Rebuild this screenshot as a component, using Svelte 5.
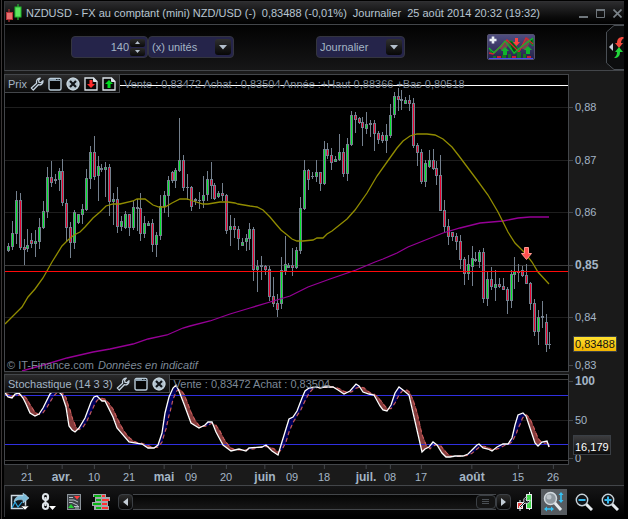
<script>
  let units = $state(140);
  let unitKind = $state('(x) unités');
  let period = $state('Journalier');
  let scroll = $state(100);

  // [x, high, low, body top, body bottom, kind] : g up, r down, n flat
  const candles = [
    [8,243,252,246,251,'g'],[12,221,250,233,247,'g'],[16,191,244,200,234,'g'],[20,193,250,200,248,'r'],
    [24,239,265,247,250,'r'],[27,229,252,245,249,'g'],[31,233,248,240,244,'r'],[35,230,257,241,244,'g'],
    [39,218,249,227,242,'g'],[43,201,229,211,228,'g'],[47,167,218,177,212,'g'],[51,161,187,177,183,'r'],
    [55,174,184,179,181,'n'],[59,168,191,171,180,'g'],[62,159,206,171,203,'r'],[66,199,242,203,228,'r'],
    [70,222,258,227,243,'r'],[74,210,249,212,243,'g'],[78,214,224,214,223,'g'],[82,204,224,209,215,'g'],
    [86,169,211,178,210,'g'],[90,146,189,152,179,'g'],[94,136,180,152,177,'r'],[98,156,201,166,176,'g'],
    [101,164,172,168,170,'n'],[105,162,197,167,170,'g'],[109,164,216,167,202,'r'],[113,193,225,199,202,'g'],
    [117,187,233,199,227,'r'],[121,216,231,221,227,'g'],[125,211,229,214,228,'g'],[129,214,236,214,228,'r'],
    [133,201,230,207,228,'g'],[137,199,231,207,209,'n'],[140,193,241,208,234,'r'],[144,216,238,223,234,'g'],
    [148,221,226,223,226,'g'],[152,219,252,223,245,'r'],[156,232,257,235,245,'g'],[160,195,240,206,236,'g'],
    [164,191,213,195,207,'g'],[168,176,217,180,196,'g'],[172,171,183,172,181,'r'],[175,168,188,170,181,'g'],
    [179,118,172,160,171,'g'],[183,155,191,160,188,'r'],[187,174,200,187,188,'n'],[191,186,211,187,207,'r'],
    [195,198,205,199,201,'n'],[199,192,209,200,201,'n'],[203,176,208,195,201,'g'],[207,171,201,179,195,'g'],
    [211,162,199,179,186,'r'],[214,183,200,185,199,'r'],[218,191,198,193,197,'g'],[222,183,201,193,196,'r'],
    [226,194,234,195,231,'r'],[230,215,246,226,230,'g'],[234,218,238,226,230,'r'],[238,226,250,229,239,'r'],
    [242,238,246,242,246,'g'],[246,234,251,238,242,'g'],[249,223,250,229,239,'g'],[253,227,281,229,270,'r'],
    [257,260,292,266,270,'g'],[261,256,280,265,267,'n'],[265,265,275,266,270,'r'],[269,266,301,269,297,'r'],
    [273,277,307,296,304,'r'],[277,294,317,303,310,'r'],[281,257,309,270,304,'g'],[285,236,275,264,271,'g'],
    [288,263,268,265,268,'g'],[292,248,276,265,268,'r'],[296,247,269,250,268,'g'],[300,197,254,208,251,'g'],
    [304,160,210,170,209,'g'],[308,169,190,170,180,'r'],[312,172,179,176,177,'n'],[316,160,182,172,177,'g'],
    [320,172,191,172,184,'r'],[324,141,185,149,184,'g'],[327,143,159,149,156,'r'],[331,148,170,155,163,'r'],
    [335,156,162,159,162,'g'],[339,134,161,152,160,'g'],[343,148,177,152,174,'r'],[347,138,181,144,174,'g'],
    [351,111,146,115,145,'g'],[355,112,133,115,120,'r'],[359,117,124,118,123,'r'],[362,117,146,122,128,'r'],
    [366,112,134,124,129,'g'],[370,120,137,123,125,'n'],[374,120,151,123,134,'r'],[378,131,144,133,140,'r'],
    [382,132,143,135,141,'r'],[386,124,153,135,141,'g'],[390,104,138,115,136,'g'],[394,92,118,96,115,'g'],
    [398,88,111,96,100,'r'],[401,90,110,99,101,'n'],[405,97,104,100,104,'g'],[409,95,111,100,104,'r'],
    [413,98,148,103,146,'r'],[417,143,166,145,153,'r'],[421,149,184,152,182,'r'],[425,160,187,163,182,'g'],
    [429,150,168,160,167,'g'],[433,149,170,160,169,'r'],[436,161,185,168,176,'r'],[440,155,211,175,211,'r'],
    [444,200,233,210,227,'r'],[448,219,245,226,237,'r'],[452,232,241,232,237,'r'],[456,233,250,236,242,'r'],
    [460,235,269,241,260,'r'],[464,257,285,259,274,'r'],[468,255,280,264,274,'g'],[472,246,286,258,267,'g'],
    [475,252,262,259,261,'n'],[479,250,268,252,262,'g'],[483,248,303,252,299,'r'],[487,271,306,279,299,'g'],
    [491,267,290,279,287,'r'],[495,270,301,284,288,'g'],[499,278,288,284,287,'r'],[503,278,290,286,290,'r'],
    [507,287,314,289,301,'r'],[511,270,308,274,301,'g'],[514,257,289,271,275,'g'],[518,264,282,271,273,'r'],
    [522,266,277,270,276,'r'],[526,264,284,275,284,'r'],[530,282,310,283,304,'r'],[534,299,336,303,332,'r'],
    [538,310,345,317,332,'g'],[542,301,328,316,318,'n'],[546,314,352,322,345,'r'],[549,332,349,344,345,'n']
  ];
  const body = { g: '#00e62a', r: '#e8002f', n: '#74808e' };

  const fastAverage = '5,324 17,312 22,307 28,297 35,289 43,278 52,262 62,246 68,240 74,235 80,232 85,227 93,218 100,212 106,206 113,204 120,204 133,201 137,199 145,199 153,205 159,207 165,207 172,203 180,199 187,199 193,201 203,204 208,204 220,202 228,202 235,203 238,204 250,206 257,207 263,210 270,217 275,223 281,230 286,234 292,239 297,241 303,241 313,240 317,238 323,238 327,234 332,231 347,219 355,210 367,193 377,176 387,162 397,148 403,141 410,136 417,134 423,134 427,134 435,135 443,139 452,147 459,156 468,168 477,180 488,195 498,212 508,232 515,243 525,253 532,262 538,272 549,284';
  const slowAverage = '22,371 47,364 67,358 93,352 110,349 133,344 148,339 167,335 183,328 190,326 210,321 230,314 250,308 270,302 290,296 308,287 330,279 356,270 375,262 383,259 397,253 408,247 423,241 443,233 460,228 480,223 503,221 518,218 530,217 549,217';

  const fastK = [
    [5,393],[8,397],[12,398],[15,394],[19,393],[23,398],[26,404],[30,413],[35,416],[39,414],[43,408],[50,394],[53,391],[58,391],[62,395],
    [66,407],[69,426],[72,430],[75,432],[79,428],[85,418],[91,402],[94,397],[97,396],[102,401],[105,401],[113,417],[117,428],[129,442],
    [142,444],[148,448],[154,448],[158,445],[162,433],[165,413],[169,397],[173,388],[176,385],[179,391],[184,404],[191,423],[199,428],
    [205,425],[208,422],[212,422],[216,432],[223,445],[231,451],[239,449],[246,451],[249,448],[262,447],[266,445],[272,451],[278,455],
    [281,445],[285,432],[289,419],[293,417],[297,411],[302,398],[305,391],[309,388],[317,387],[320,388],[324,387],[333,387],[338,390],
    [344,394],[350,391],[356,384],[359,386],[363,392],[369,394],[374,395],[380,406],[383,410],[387,411],[391,405],[395,393],[399,387],
    [403,390],[409,395],[422,452],[425,449],[429,447],[433,442],[437,445],[442,453],[446,457],[450,457],[455,456],[463,456],[468,454],
    [473,449],[477,445],[479,444],[483,448],[488,449],[492,451],[497,447],[503,444],[508,444],[512,438],[515,425],[518,415],[523,413],
    [526,416],[530,428],[535,443],[538,446],[542,442],[547,441],[549,447]
  ];

  function valueAt(x) {
    if (x <= fastK[0][0]) return fastK[0][1];
    for (let i = 1; i < fastK.length; i++) {
      const [x1, y1] = fastK[i];
      if (x <= x1) {
        const [x0, y0] = fastK[i - 1];
        return y0 + ((x - x0) * (y1 - y0)) / (x1 - x0);
      }
    }
    return fastK[fastK.length - 1][1];
  }

  let above = '';
  let below = '';
  const signal = [];
  for (let x = 5; x < 550; x++) {
    const k = valueAt(x);
    const d = (k + valueAt(x - 4) + valueAt(x - 8)) / 3;
    signal.push(`${x},${d.toFixed(1)}`);
    const bar = `M${x + 0.5} ${k.toFixed(1)}V${d.toFixed(1)}`;
    if (d < k) above += bar;
    else below += bar;
  }
  const kLine = fastK.map((p) => p.join(',')).join(' ');

  const prices = [['0,88',107],['0,87',160],['0,86',212],['0,85',265],['0,84',317],['0,83',365]];
  const levels = [['100',381],['50',420],['0',458]];
  const days = [['21',27],['avr.',62],['10',94],['21',129],['mai',164],['09',191],['20',226],['juin',265],['09',292],['18',324],['juil.',366],['08',390],['17',421],['août',472],['15',518],['26',553]];
</script>

{#snippet wrench()}
  <svg width="14" height="14" viewBox="0 0 14 14"><path d="M1.3 11 6.6 6.2C6 3.600 7.500 1 10.300 1.200L8.600 3.200 9 5.300 11 5.600 13 3.800C13.300 6.800 10.700 8.400 8.300 7.700L3.300 13Z" fill="#15191d" stroke="#c5d3df" stroke-width="1.300" stroke-linejoin="round" /></svg>
{/snippet}
{#snippet pane()}
  <svg width="14" height="14" viewBox="0 0 14 14"><rect x="1" y="1.500" width="12" height="11.500" rx="1.500" fill="#050505" stroke="#b9cbd8" stroke-width="1.400" /><path d="M1.500 3h11" stroke="#8fa3b2" stroke-width="2" /><path d="M8 2.500h1.500M10.500 2.500h1.500" stroke="#172027" /></svg>
{/snippet}
{#snippet cross()}
  <svg width="14" height="14" viewBox="0 0 14 14"><circle cx="7" cy="7" r="6.500" fill="#b3c3ce" /><path d="M4 4l6 6M10 4l-6 6" stroke="#101418" stroke-width="2.200" /><circle cx="7" cy="7" r="6" fill="none" stroke="#d6e2ea" stroke-width=".7" /></svg>
{/snippet}
{#snippet sheet(up)}
  <svg width="14" height="14" viewBox="0 0 14 14"><path d="M1 1h8.500L13 4.500V13H1Z" fill="#080808" stroke="#dce4ea" stroke-width="1.300" /><path d="M9.500 1v3.500H13" fill="#dce4ea" stroke="#dce4ea" />
    {#if up}<path d="M7 3l4 4H8.500v4h-3V7H3Z" fill="#00dc20" />{:else}<path d="M5.500 3h3v4H11l-4 4-4-4h2.500Z" fill="#ff2b2b" />{/if}</svg>
{/snippet}
{#snippet caret()}
  <span class="caret"><svg width="8" height="5" viewBox="0 0 8 5"><path d="M0 0h8L4 4.500Z" fill="#b4c0cc" /></svg></span>
{/snippet}

<div class="window">
  <header class="title">
    <svg width="18" height="18" viewBox="0 0 18 18"><path d="M4 5v13" stroke="#c43a3e" /><path d="M13 0v16" stroke="#29d235" /><rect x="1.500" y="8.500" width="6" height="7" fill="#e86f6f" stroke="#b6323a" /><rect x="10" y="3" width="6" height="10" fill="#5fe45f" stroke="#20b52c" /></svg>
    <h1>NZDUSD - FX au comptant (mini) NZD/USD (-)</h1>
    <span>0,83488 (-0,01%)</span>
    <span>Journalier&nbsp; 25 août 2014 20:32 (19:32)</span>
    <div class="controls">
      <button aria-label="Réduire"><svg width="9" height="9" viewBox="0 0 9 9"><path d="M0 8h9" stroke="#6f767c" stroke-width="2" /></svg></button>
      <button aria-label="Agrandir"><svg width="9" height="9" viewBox="0 0 9 9"><path d="M.5 1h8v7.500h-8Z" fill="none" stroke="#6f767c" /><path d="M0 1h9" stroke="#6f767c" stroke-width="2" /></svg></button>
      <button aria-label="Fermer"><svg width="9" height="9" viewBox="0 0 9 9"><path d="M.5.5l8 8M8.500.5l-8 8" stroke="#7c848a" stroke-width="1.600" /></svg></button>
    </div>
  </header>

  <div class="tools">
    <div class="group">
      <div class="field number">
        <input type="number" aria-label="Nombre d'unités" bind:value={units} />
        <div class="spin">
          <button aria-label="Plus" onclick={() => units++}><svg width="5" height="3" viewBox="0 0 5 3"><path d="M0 3h5L2.500 0Z" fill="#b4c0cc" /></svg></button>
          <button aria-label="Moins" onclick={() => units--}><svg width="5" height="3" viewBox="0 0 5 3"><path d="M0 0h5L2.500 3Z" fill="#b4c0cc" /></svg></button>
        </div>
      </div>
      <div class="field choice">
        <select aria-label="Type d'unités" bind:value={unitKind}><option>(x) unités</option><option>jours</option></select>
        {@render caret()}
      </div>
    </div>
    <div class="field choice wide">
      <select aria-label="Période" bind:value={period}><option>Journalier</option><option>Hebdomadaire</option></select>
      {@render caret()}
    </div>
    <button class="indicator" aria-label="Ajouter un indicateur">
      <svg width="46" height="24" viewBox="0 0 46 24">
        <path d="M11 13 18 5l4 2-6 10ZM32 13l7-11 4 3-5 10Z" fill="#7a4650" />
        <path d="M20 6 26 19l5-4-7-9ZM40 6l5 5V4ZM1 13l4 4 5-3-6 5Z" fill="#064d16" stroke="#0c9b25" />
        <path d="M1 18 5 19 19 5 31 17 38 3 45 9" fill="none" stroke="#d8232e" stroke-width="1.300" />
        <path d="M1 13 6 18 13 11 17 6 26 18 33 12 41 6 45 3" fill="none" stroke="#15b72c" stroke-width="1.200" />
        <path d="M17 12l4 4h-2v4h-4v-4h-2ZM40 11l4 4h-2v4h-4v-4h-2Z" fill="#10b52c" />
        <path d="M27 3h3v4h2l-3.500 4L25 7h2Z" fill="#ff4141" />
        <path d="M14 20h4v3h-4ZM20 19h3v4h-3ZM29 17h4v6h-4ZM35 19h3v4h-3ZM5 21h3v2H5Z" fill="#16721f" /><path d="M9 21h4v2H9ZM24 21h4v2h-4ZM39 21h4v2h-4Z" fill="#c8202d" /><path d="M1 23.500h44" stroke="#4d4df0" />
        <path d="M5 1.500v7M1.500 5h7" stroke="#e9eef4" stroke-width="2.600" />
      </svg>
    </button>
    <button class="drawer" aria-label="Ouvrir le panneau d'ordres">
      <svg width="18" height="45" viewBox="0 0 18 45">
        <path d="M18 .5H8L.5 7v31L8 44.500h10" fill="#0c0d0e" stroke="#4a4f55" />
        <path d="M7 18v8l-4-4Z" fill="#c6d0da" />
        <path d="M17 12c-4 0-6 2-6 6H9l4 5 4-5h-2c0-2 1-4 3-5Z" fill="#f34a3d" />
        <path d="M8 33c4 0 6-2 6-6h3l-4-5-4 5h2c0 3-1 4-3 6Z" fill="#22d63b" />
      </svg>
    </button>
  </div>

  <main>
    <section class="plot price">
      <svg class="canvas" viewBox="5 75 563 296" preserveAspectRatio="none" role="img" aria-label="Cours NZD/USD">
        <path d="M5 107.500H568M5 160.500H568M5 212.500H568M5 317.500H568" stroke="#1e1e1e" />
        <path d="M5 265.500H568" stroke="#3c3c3c" />
        <g shape-rendering="crispEdges">
          {#each candles as [x, high, low, top, bottom, kind]}
            <rect {x} y={high} width="1" height={low - high} fill="#74808e" />
            <rect x={x - 1} y={top} width="3" height={Math.max(1, bottom - top)} fill="#74808e" />
            {#if kind !== 'n'}<rect {x} y={top + 1} width="1" height={Math.max(1, bottom - top - 2)} fill={body[kind]} />{/if}
          {/each}
        </g>
        <polyline points={slowAverage} fill="none" stroke="#960096" stroke-width="1.300" />
        <polyline points={fastAverage} fill="none" stroke="#918c00" stroke-width="1.300" />
        <path d="M5 271.500H568" stroke="#ff0a0a" />
        <path d="M5 85.500H568" stroke="#ffffff" />
        <path d="M524.500 247.500h4v6h3l-5 6-5-6h3Z" fill="#ff5050" stroke="#ff9a90" />
      </svg>
      <div class="legend">
        <div class="head"><span>Prix</span>
          <div class="acts">
            <button aria-label="Réglages du prix">{@render wrench()}</button>
            <button aria-label="Agrandir le prix">{@render pane()}</button>
            <button aria-label="Fermer le prix">{@render cross()}</button>
            <button aria-label="Vendre">{@render sheet(false)}</button>
            <button aria-label="Acheter">{@render sheet(true)}</button>
          </div>
        </div>
        <p>Vente : 0,83472 Achat : 0,83504 Année :+Haut 0,88366 +Bas 0,80518</p>
      </div>
      <p class="source">© IT-Finance.com <em>Données en indicatif</em></p>
    </section>
    <div class="axis">
      {#each prices as [label, y]}
        <span class="mark" class:strong={label === '0,85'} style:top="{y - 74}px">{label}</span>
      {/each}
      <span class="mark tag last" style:top="270px">0,83488</span>
    </div>

    <section class="plot stoch">
      <svg class="canvas" viewBox="5 375 563 89" preserveAspectRatio="none" role="img" aria-label="Stochastique">
        <path d="M5 379.500H568M5 460.500H568" stroke="#3c3c3c" />
        <path d="M5 420.500H568" stroke="#1e1e1e" />
        <path d={above} stroke="#853b3b" />
        <path d={below} stroke="#00005c" />
        <path d="M5 395.500H568M5 444.500H568" stroke="#3030e0" />
        <polyline points={signal.join(' ')} fill="none" stroke="#c45a5a" stroke-width="1.200" stroke-dasharray="4 3" />
        <polyline points={kLine} fill="none" stroke="#ffffff" stroke-width="1.300" />
      </svg>
      <div class="legend">
        <div class="head"><span>Stochastique (14 3 3)</span>
          <div class="acts">
            <button aria-label="Réglages du stochastique">{@render wrench()}</button>
            <button aria-label="Agrandir le stochastique">{@render pane()}</button>
            <button aria-label="Fermer le stochastique">{@render cross()}</button>
          </div>
        </div>
        <p>Vente : 0,83472 Achat : 0,83504</p>
      </div>
    </section>
    <div class="axis">
      {#each levels as [label, y]}
        <span class="mark" class:strong={label === '100'} style:top="{y - 374}px">{label}</span>
      {/each}
      <span class="mark tag now" style:top="71px">16,179</span>
    </div>

    <div class="time">
      {#each days as [label, x]}
        <span class:month={/[a-z]/.test(label)} style:left="{((x - 4) / 565) * 100}%">{label}</span>
      {/each}
    </div>
  </main>

  <footer>
    <div class="left">
      <button aria-label="Exporter"><svg width="20" height="20" viewBox="0 0 20 20"><rect x="1.500" y="3.500" width="14" height="13" fill="#10171d" stroke="#cfd9e2" stroke-width="1.500" /><path d="M2 16l3-6 3 5 4-5" fill="none" stroke="#2fa9e4" stroke-width="1.200" /><path d="M4 10c1-6 6-7 9-6V1l6 5-6 5V8c-4-1-7 0-9 2Z" fill="#7dbbd8" stroke="#b9dced" stroke-width=".6" /><path d="M11 14h8l-4 4Z" fill="#fff" stroke="#222" stroke-width=".6" /></svg></button>
      <button aria-label="Lier"><svg width="17" height="20" viewBox="0 0 17 20"><rect x="3" y="2" width="5" height="6" rx="2.500" fill="none" stroke="#dfe5ea" stroke-width="2.200" /><rect x="3" y="11" width="5" height="6" rx="2.500" fill="none" stroke="#dfe5ea" stroke-width="2.200" /><path d="M5.500 5v9" stroke="#dfe5ea" stroke-width="2" /><path d="M9 14h7l-3.500 4Z" fill="#fff" /></svg></button>
      <button aria-label="Ordres"><svg width="15" height="18" viewBox="0 0 15 18"><rect x=".5" y="1.500" width="13" height="15" fill="#3c4247" stroke="#8b939a" /><path d="M2 4.500h4M2 7h5l4 2M2 9.500h3l6 3M7 13.500h5M8 15h4" fill="none" stroke="#b7c0c7" /><path d="M7 3h6l-3 3.500Z" fill="#ff3c3c" /><path d="M1 15h6l-3-4Z" fill="#1fd12e" /></svg></button>
      <button aria-label="Carnet"><svg width="19" height="18" viewBox="0 0 19 18"><path d="M1 1h13v3h4v4h-2v5h1v4H2v-4H0V9h3V4H1Z" fill="#a3a9ad" /><path d="M2 3h7M4 7h5M1 11h8M4 15h5" stroke="#08b414" stroke-width="2" /><path d="M10 3h3M10 7h7M10 11h5M10 15h6" stroke="#ff3232" stroke-width="2" /></svg></button>
    </div>
    <div class="scroller">
      <button class="arrow" aria-label="Reculer"><svg width="5" height="8" viewBox="0 0 5 8"><path d="M5 0v8L0 4Z" fill="#c3ccd5" /></svg></button>
      <input type="range" aria-label="Défilement" bind:value={scroll} />
      <button class="arrow" aria-label="Avancer"><svg width="5" height="8" viewBox="0 0 5 8"><path d="M0 0v8l5-4Z" fill="#c3ccd5" /></svg></button>
    </div>
    <div class="right">
      <button aria-label="Style du graphique"><svg width="16" height="20" viewBox="0 0 16 20"><path d="M3 8v11M12.500 0v18" stroke="#e8edf1" /><rect x=".5" y="10.500" width="5" height="6" fill="#e43d3d" stroke="#e8edf1" /><rect x="9.500" y="2.500" width="5" height="14" fill="#41d84b" stroke="#e8edf1" /><path d="M2 15l5-5C6 7 8 5 10 5l-1 3 1 1 3-1c0 3-3 4-5 3l-5 5Z" fill="#15191d" stroke="#dde4ea" /></svg></button>
      <button class="on" aria-label="Échelle automatique"><svg width="22" height="22" viewBox="0 0 22 22"><path d="M11 11l7 8" stroke="#e5eaee" stroke-width="3" /><circle cx="7.500" cy="7.500" r="6" fill="#8e979e" stroke="#d2d9de" stroke-width="1.500" /><circle cx="6" cy="6" r="2.500" fill="#bcc4ca" /><path d="M18 3v8M2 18h8" stroke="#35c3f5" stroke-width="1.600" /><path d="M15.500 4 18 1l2.500 3ZM15.500 9l2.500 3 2.500-3ZM4 15.500 1 18l3 2.500ZM8 15.500l3 2.500-3 2.500Z" fill="#35c3f5" /></svg></button>
      <button aria-label="Zoom arrière"><svg width="18" height="18" viewBox="0 0 18 18"><path d="M10 10l7 7" stroke="#e5eaee" stroke-width="3" /><circle cx="7" cy="7" r="5.700" fill="#101418" stroke="#c9d3da" stroke-width="1.400" /><path d="M3.500 7h7" stroke="#35b9ee" stroke-width="2" /></svg></button>
      <button aria-label="Zoom avant"><svg width="18" height="18" viewBox="0 0 18 18"><path d="M10 10l7 7" stroke="#e5eaee" stroke-width="3" /><circle cx="7" cy="7" r="5.700" fill="#101418" stroke="#c9d3da" stroke-width="1.400" /><path d="M3.500 7h7M7 3.500v7" stroke="#35b9ee" stroke-width="2" /></svg></button>
    </div>
  </footer>
</div>

<style>
  :global(body) { margin: 0; background: #000; }
  .window, .window * { box-sizing: border-box; }
  .window {
    font: 11px/14px "Liberation Sans", Arial, sans-serif;
    color: #a4b5c5;
    background: #000;
    min-width: 600px;
    padding: 1px 4px 2px 2px;
    border-left: 1px solid #000;
    box-shadow: inset 1px 0 #3a3636;
  }
  .window > * { margin-left: 1px; border-left: 1px solid #34363a; }
  button { padding: 0; margin: 0; border: 0; background: none; color: inherit; font: inherit; display: flex; align-items: center; justify-content: center; cursor: pointer; }
  svg { display: block; flex: none; }
  h1, p { margin: 0; font: inherit; }

  .title { display: flex; align-items: center; gap: 6px; height: 24px; padding-right: 2px; background: linear-gradient(#2c2c2e, #0a0a0a 70%, #000); border-bottom: 1px solid #43464a; border-top: 1px solid #303033; white-space: nowrap; color: #b8c5d1; }
  .title h1 { margin-left: -3px; }
  .controls { display: flex; gap: 8px; margin-left: auto; }

  .tools { display: flex; align-items: flex-start; height: 46px; padding-left: 66px; background: linear-gradient(#020202, #161617); border-bottom: 1px solid #43464a; }
  .group { display: flex; margin-right: 82px; }
  .field { display: flex; align-items: center; height: 22px; margin-top: 11px; background: #25244a; border: 1px solid #34353f; border-radius: 4px; }
  .field input, .field select { appearance: none; border: 0; outline: 0; padding: 0; margin: 0; background: none; color: inherit; font: inherit; flex: 1; min-width: 0; }
  .number { width: 77px; padding-right: 2px; }
  .number input { text-align: right; }
  .number input::-webkit-inner-spin-button { appearance: none; margin: 0; }
  .spin { display: flex; flex-direction: column; gap: 1px; margin-left: 1px; }
  .spin button { width: 15px; height: 8px; background: linear-gradient(#2b2b2b, #0a0a0a); border-radius: 2px; }
  .choice { position: relative; width: 86px; }
  .choice.wide { width: 89px; margin-right: 82px; }
  .choice select { padding: 0 20px 0 3px; height: 20px; }
  .caret { position: absolute; right: 2px; top: 2px; width: 16px; height: 16px; display: flex; align-items: center; justify-content: center; pointer-events: none; background: linear-gradient(#303030, #070707); border-radius: 3px; }
  .indicator { width: 48px; height: 26px; margin-top: 9px; background: linear-gradient(#4f4d80, #25234a); border: 1px solid #54526e; border-radius: 2px; }
  .drawer { margin-left: auto; }

  main { display: grid; grid-template-columns: minmax(0, 1fr) 55px; row-gap: 2px; padding-top: 3px; background: #1a1a1a; border-left: 0 !important; }
  .plot { position: relative; background: #000; border: 1px solid #43464a; }
  .canvas { width: 100%; }
  .price .canvas { height: 296px; }
  .stoch .canvas { height: 89px; }
  .legend { position: absolute; top: 0; left: 0; display: flex; align-items: center; white-space: nowrap; }
  .legend p { margin-left: 4px; color: #7d8997; }
  .head { display: flex; align-items: center; gap: 3px; height: 18px; padding: 0 3px; background: linear-gradient(#2a2a2b, #0c0c0c); border: solid #43464a; border-width: 0 1px 1px 0; }
  .acts { display: flex; gap: 4px; }
  .source { position: absolute; left: 2px; bottom: -1px; color: #7d8997; white-space: nowrap; }
  .source em { margin-left: 1px; }

  .axis { position: relative; }
  .mark { position: absolute; left: 0; display: flex; align-items: center; transform: translateY(-50%); line-height: 14px; }
  .mark::before { content: ""; width: 4px; margin-right: 2px; border-top: 1px solid #43464a; }
  .strong { font-size: 12px; font-weight: bold; }
  .tag { left: 4px; padding: 0 1px; border: 1px solid #3a3f45; }
  .tag::before { content: none; }
  .last { background: linear-gradient(#ffe030, #f2b400); color: #111; }
  .now { height: 20px; padding-top: 4px; background: linear-gradient(#3c3c3e, #0c0c0c); color: #fff; }

  .time { position: relative; height: 18px; }
  .time span { position: absolute; top: -2px; transform: translateX(-50%); display: flex; flex-direction: column; align-items: center; line-height: 14px; }
  .time span::before { content: ""; height: 4px; margin-bottom: 1px; border-left: 1px solid #43464a; }
  .time .month { font-size: 12px; font-weight: bold; }

  footer { display: flex; align-items: center; height: 32px; padding: 0 5px; background: linear-gradient(#161617, #000); border-top: 1px solid #43464a; }
  .left { display: flex; align-items: center; gap: 10px; }
  .scroller { display: flex; align-items: center; flex: 1; margin: 0 6px 0 7px; }
  .arrow { width: 15px; height: 16px; border: 1px solid #3b3f44; border-radius: 4px; background: linear-gradient(#2c2c2c, #050505); }
  .scroller input { appearance: none; flex: 1; min-width: 0; height: 16px; margin: 0; background: linear-gradient(#050505, #161616); border: solid #43464a; border-width: 1px 0; }
  .scroller input::-webkit-slider-thumb { appearance: none; width: 20px; height: 14px; border: 1px solid #3b3f44; border-radius: 4px; background: linear-gradient(#4a4f54, #4a4f54) 5px 3px / 7px 1px no-repeat, linear-gradient(#4a4f54, #4a4f54) 5px 5px / 7px 1px no-repeat, linear-gradient(#4a4f54, #4a4f54) 5px 7px / 7px 1px no-repeat, #141414; }
  .right { display: flex; align-items: center; gap: 8px; }
  .right .on { width: 26px; height: 26px; background: #565b60; }
</style>
